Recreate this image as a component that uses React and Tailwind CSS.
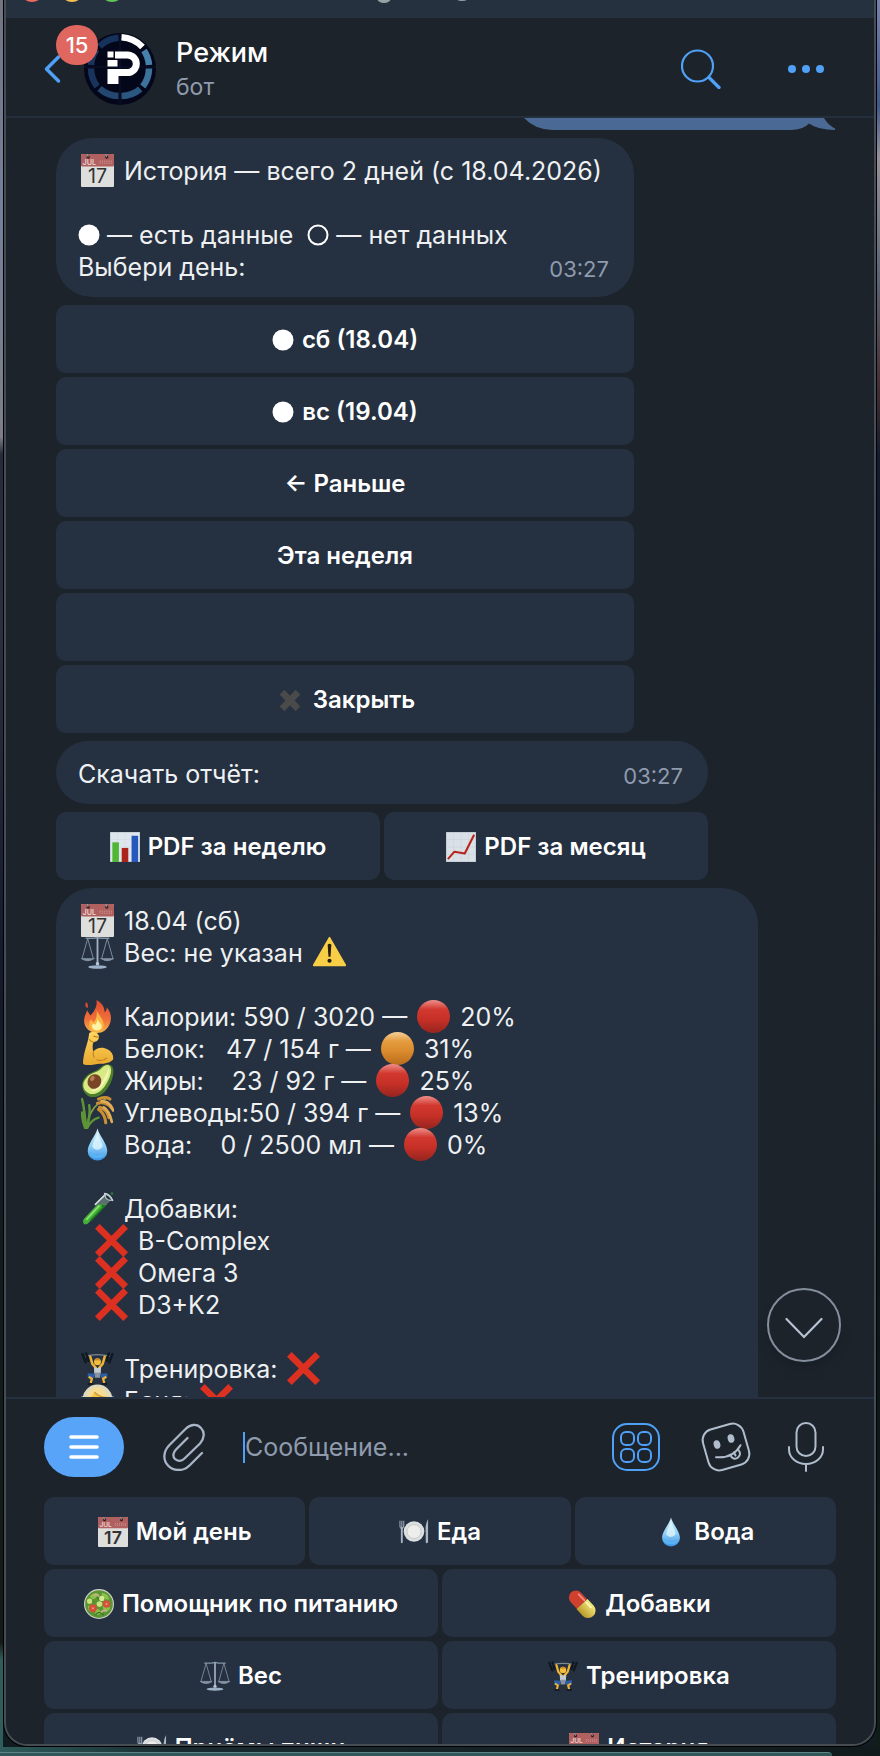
import React from 'react';

// ---------- Emoji drawings, all on a 32x32 canvas ----------

const Calendar = () => (
  <>
    <rect x="0" y="0" width="32" height="32" rx="1" fill="#dededd" />
    <rect x="0" y="0" width="32" height="12" rx="1" fill="#b0605f" />
    <circle cx="7" cy="3" r="1.6" fill="#2a1f26" />
    <circle cx="25" cy="3" r="1.6" fill="#2a1f26" />
    <path d="M6 0l1 3M24 0l1 3" stroke="#8da0a8" strokeWidth="1" />
    <path d="M18 7h12M18 9h12" stroke="#c48583" strokeWidth="1.4" strokeDasharray="1.2 1" />
    <text x="1.5" y="11" fontSize="7" fontWeight="600" fill="#e8d2d0">JUL</text>
    <text x="16" y="28.5" fontSize="19" textAnchor="middle" fill="#333">17</text>
  </>
);

const Scales = () => (
  <g fill="none" stroke="#8392a3" strokeLinecap="round">
    <path d="M5 2.2h8q3-1.6 6 0h8" strokeWidth="1.4" />
    <path d="M16 2v25" strokeWidth="1.8" stroke="#9fb0c2" />
    <path d="M6.5 2.5L1 22M6.5 2.5L12 22M25.5 2.5L20 22M25.5 2.5L31 22" strokeWidth="0.9" />
    <path d="M0.5 22q6 4 12 0zM19.5 22q6 4 12 0z" fill="#8595a8" strokeWidth="1" />
    <circle cx="16" cy="27" r="1.7" fill="#b9c6d4" stroke="none" />
    <ellipse cx="16" cy="30" rx="9" ry="1.7" fill="#9db0c5" stroke="none" />
  </g>
);

const Warning = () => (
  <>
    <path d="M16 1.5L31.5 28.5H0.5z" fill="#f8ce46" stroke="#f8ce46" strokeWidth="1.5" strokeLinejoin="round" />
    <path d="M14.2 8.5q1.8-2 3.6 0L17 20h-2z" fill="#241d0a" />
    <circle cx="16" cy="24" r="2" fill="#241d0a" />
  </>
);

const Fire = () => (
  <>
    <defs>
      <linearGradient id="fire" x1="0" y1="0" x2="0" y2="1">
        <stop offset="0" stopColor="#e2492f" />
        <stop offset="0.6" stopColor="#f0703a" />
        <stop offset="1" stopColor="#f7b743" />
      </linearGradient>
    </defs>
    <path d="M15 0c6 3 8 8 8 12 1-1 2-3 2-5 5 6 5 13 2 18-2 4-6 7-11 7-7 0-13-5-13-12 0-4 2-7 3-10 1 2 2 3 3 5C13 11 16 6 15 0z" fill="url(#fire)" />
    <path d="M5 2q3 3 1 6-3-2-1-6z" fill="#dd4a34" />
    <path d="M15 9c1 5 7 9 7 15 0 4-3 7-6 7-5 0-8-3-8-8 0-3 2-4 2-4l2 3c3-3 4-8 3-13z" fill="#fbb545" />
    <path d="M16 18c0 3 5 5 4 9-1 3-7 4-9 0-1-3 1-4 1-4l2 1q2-2 2-6z" fill="#fff3a4" />
  </>
);

const Muscle = () => (
  <>
    <defs>
      <linearGradient id="muscle" x1="0" y1="0" x2="0" y2="1">
        <stop offset="0" stopColor="#ffd75e" />
        <stop offset="1" stopColor="#e9a92f" />
      </linearGradient>
    </defs>
    <path
      d="M8 1c3-2 8-1 9 2 1 2 0 5-2 6l-3 1c-1 3-1 6 0 9 3-4 9-5 14-2 4 2 6 6 5 10-4 4-10 4-15 4-5 1-10 2-14 0 0-9 3-16 5-24z"
      fill="url(#muscle)"
    />
    <path d="M12 4l5 1M12 10q-3-1-4-3M12 19q-1 3 1 6M15 27q6 2 10-2" fill="none" stroke="#c07b1f" strokeWidth="1" />
  </>
);

const Avocado = () => (
  <>
    <path d="M30 2c3 4 1 14-4 21-5 8-13 11-19 8-6-4-8-12-3-18C9 7 14 8 18 4c4-4 9-5 12-2z" fill="#4b7f2c" />
    <path d="M28 2c3 4 0 12-4 18-5 8-12 11-17 8-6-3-6-10-2-14 4-6 10-5 14-9 4-4 7-5 9-3z" fill="#d9ea85" />
    <path d="M27 4c1 4-1 9-5 15-4 7-9 8-13 7 8-3 12-8 18-22z" fill="#f2f6b5" />
    <ellipse cx="13" cy="17" rx="6.5" ry="7.2" transform="rotate(30 13 17)" fill="#7a4526" />
    <ellipse cx="11" cy="14" rx="2" ry="2.6" transform="rotate(30 11 14)" fill="#b87c52" />
  </>
);

const Rice = () => (
  <g fill="none" strokeLinecap="round">
    <path d="M6 31C6 20 12 8 24 3" stroke="#8aa043" strokeWidth="1.6" />
    <path d="M5 31C4 22 3 10 1 3M5 31C8 24 9 16 8 9M6 31C9 25 13 22 17 21M4 31C2 26 1 20 1 16" stroke="#5d9436" strokeWidth="2.4" />
    <path d="M17 3q6-3 11 0M16 7q8-2 14 5M18 11q7 2 9 10M17 13q6 4 7 13" stroke="#c88f36" strokeWidth="3" strokeDasharray="3 1.2" />
    <path d="M20 5q8 0 11 9M22 11q6 4 8 15" stroke="#e1ae56" strokeWidth="2.6" strokeDasharray="3 1.5" />
  </g>
);

const Drop = () => (
  <>
    <defs>
      <linearGradient id="drop" x1="0" y1="0" x2="0" y2="1">
        <stop offset="0" stopColor="#d8f3fd" />
        <stop offset="0.55" stopColor="#8fd0f7" />
        <stop offset="1" stopColor="#3c93e6" />
      </linearGradient>
    </defs>
    <path d="M16 0.5C18 8 25.5 15 25.5 22.5a9.5 9 0 0 1-19 0C6.5 15 14 8 16 0.5z" fill="url(#drop)" />
    <path d="M16 3.5C16.5 9 20.5 13 21 18c-2 4-9 4-10 0C11.5 13 15 9 16 3.5z" fill="#e6f7fe" opacity="0.75" />
    <path d="M9 24q3 6 12 3" fill="none" stroke="#57b7f6" strokeWidth="2" strokeLinecap="round" />
  </>
);

const RedBall = () => (
  <>
    <defs>
      <linearGradient id="red" x1="0" y1="0" x2="0" y2="1">
        <stop offset="0" stopColor="#ee8f8a" />
        <stop offset="0.28" stopColor="#d23a30" />
        <stop offset="0.6" stopColor="#c62f26" />
        <stop offset="1" stopColor="#94261f" />
      </linearGradient>
    </defs>
    <circle cx="16" cy="16" r="16" fill="url(#red)" />
  </>
);

const OrangeBall = () => (
  <>
    <defs>
      <linearGradient id="orange" x1="0" y1="0" x2="0" y2="1">
        <stop offset="0" stopColor="#f6d19a" />
        <stop offset="0.28" stopColor="#e49c3e" />
        <stop offset="0.6" stopColor="#d98a2c" />
        <stop offset="1" stopColor="#ba6c1c" />
      </linearGradient>
    </defs>
    <circle cx="16" cy="16" r="16" fill="url(#orange)" />
  </>
);

const TestTube = () => (
  <>
    <path d="M23 4L3 26q-2 3 0 5 2 1 4-1L28 9z" fill="#7f9a8e" opacity="0.6" />
    <path d="M16 12h9L7 30q-2 2-4 1-2-2 0-5z" fill="#43b037" />
    <path d="M18 13L5 27" stroke="#8be26f" strokeWidth="1.6" />
    <path d="M20 13.5h3L9 28" fill="none" stroke="#1d7a22" strokeWidth="1.6" />
    <path d="M23 1.5q5 1 7.5 6.5M24 2L14 12" fill="none" stroke="#d5dfe2" strokeWidth="1.7" strokeLinecap="round" />
    <path d="M23 2q5 0 7 6-6 1-7-6z" fill="none" stroke="#b5c3c7" strokeWidth="1" />
    <circle cx="30" cy="1.5" r="1.2" fill="#2f7d36" />
  </>
);

const Cross = () => (
  <path d="M4.5 0L16 11.5 27.5 0 32 4.5 20.5 16 32 27.5 27.5 32 16 20.5 4.5 32 0 27.5 11.5 16 0 4.5z" fill="#dc3021" />
);

const Lifter = () => (
  <>
    <path d="M4 4q12-3 24 0" fill="none" stroke="#7b8790" strokeWidth="1.2" />
    <path d="M1.5 2l3 8M5 1.5l2 7M30.5 2l-3 8M27 1.5l-2 7" stroke="#101820" strokeWidth="2.4" strokeLinecap="round" />
    <path d="M9 4.5l2 7 3.5 4M23 4.5l-2 7-3.5 4" fill="none" stroke="#efb336" strokeWidth="2.4" strokeLinecap="round" strokeLinejoin="round" />
    <circle cx="16" cy="9.5" r="3.4" fill="#f4be3e" />
    <path d="M12.7 8.5q3.3-5 6.6 0-3-1-6.6 0z" fill="#c98b22" />
    <path d="M12.5 14.5q3.5 2 7 0l-0.5 8h-6z" fill="#c3cad2" />
    <path d="M13.5 20h5v5h-5z" fill="#8b949c" />
    <path d="M14 21l-7.5-0.5v4.5l6 0.5zM18 21l7.5-0.5v4.5l-6 0.5z" fill="#2e5fa6" />
    <path d="M7.5 24l3 2-1 4M24.5 24l-3 2 1 4" fill="none" stroke="#efb336" strokeWidth="2.2" />
    <path d="M7.5 31h4M20.5 31h4" stroke="#151c24" strokeWidth="2" strokeLinecap="round" />
  </>
);

const Sauna = () => (
  <>
    <circle cx="16" cy="15" r="14.5" fill="#f3edcf" opacity="0.9" />
    <path d="M2 12q-3 8 2 14M30 12q3 8-2 14" fill="none" stroke="#cfd8e0" strokeWidth="3" opacity="0.6" />
    <circle cx="16" cy="15" r="10" fill="#f5c548" />
    <path d="M6 14q0-10 9-11 9 0 11 11-9-1-13-6-2 5-7 6z" fill="#f3dc93" />
    <path d="M13 8q5 5 12 5" fill="none" stroke="#d39a2c" strokeWidth="1.5" />
    <path d="M12 14v3M20 14v3" stroke="#6a4417" strokeWidth="2" strokeLinecap="round" />
    <path d="M4 32q2-8 12-8t12 8z" fill="#f5c548" />
  </>
);

const BarChart = () => (
  <>
    <rect x="0" y="0" width="32" height="32" fill="#dfe7ee" stroke="#aeb8c0" strokeWidth="1" />
    <path d="M0 8h32M0 16h32M0 24h32M8 0v32M16 0v32M24 0v32" stroke="#d0dae2" strokeWidth="0.6" />
    <rect x="2.5" y="11" width="7" height="21" fill="#4fb733" />
    <rect x="12.5" y="17" width="7" height="15" fill="#ad241c" />
    <rect x="23" y="4" width="7" height="28" fill="#2458bd" />
  </>
);

const LineChart = () => (
  <>
    <rect x="0" y="0" width="32" height="32" fill="#d9e0e6" stroke="#aeb8c0" strokeWidth="1" />
    <path d="M0 8h32M0 16h32M0 24h32M8 0v32M16 0v32M24 0v32" stroke="#ccd5dc" strokeWidth="0.6" />
    <path d="M2 29l7-8 11 2L30 3" fill="none" stroke="#b8241c" strokeWidth="2.2" strokeLinejoin="round" />
  </>
);

const Plate = () => (
  <>
    <circle cx="16" cy="15.5" r="11" fill="#dcdfe0" />
    <circle cx="16" cy="15.5" r="7.5" fill="#ededec" stroke="#c6cacb" strokeWidth="1" />
    <path d="M1 4v5q0 3 2 3t2-3V4M3 4v9" fill="none" stroke="#8c99a8" strokeWidth="1.3" />
    <path d="M3 12v15" stroke="#a9b6c3" strokeWidth="2" strokeLinecap="round" />
    <path d="M31 2v25q-2 2-2.5 0V17q-1-9 2.5-15z" fill="#a9b6c3" />
  </>
);

const Salad = () => (
  <>
    <circle cx="16" cy="16" r="16" fill="#cfd2cd" />
    <circle cx="16" cy="16" r="14.8" fill="#5b9634" />
    <path d="M6 8q4-5 9-3-1 5-6 6zM19 4q7 1 8 7-6 1-8-3zM4 18q6-1 9 4-4 4-8 1zM20 18q5-2 8 2-2 5-7 4zM12 22q4-2 6 3-2 4-6 2z" fill="#8cc04a" />
    <path d="M12 28q4-6 9 0M14 9q4 4 8 1M3 14q5-3 7 0" fill="none" stroke="#3d7824" strokeWidth="1.4" />
    <circle cx="9.5" cy="20.5" r="4.2" fill="#d4523a" />
    <circle cx="24" cy="16" r="4" fill="#d4523a" />
    <circle cx="9.5" cy="20.5" r="1" fill="#eea27b" />
    <circle cx="24" cy="16" r="1" fill="#eea27b" />
    <circle cx="6" cy="13" r="2.8" fill="#cbe37c" />
    <circle cx="16.5" cy="16" r="3" fill="#cbe37c" />
    <circle cx="19" cy="10" r="2.8" fill="#d7e992" />
    <path d="M10 7q4-3 6 1M18 25q4-4 6-1" fill="none" stroke="#c9b08f" strokeWidth="1.8" />
  </>
);

const Pill = () => (
  <g transform="rotate(47 16 16)">
    <defs>
      <linearGradient id="pill" x1="0" y1="0" x2="0" y2="1">
        <stop offset="0" stopColor="#f4ea7c" />
        <stop offset="1" stopColor="#b99a2b" />
      </linearGradient>
    </defs>
    <path d="M16 8.5H6.500a7.5 7.5 0 0 0 0 15H16z" fill="#d0402f" />
    <path d="M16 8h9.5a8 8 0 0 1 0 16H16z" fill="url(#pill)" />
    <path d="M6 11.5h9" stroke="#ee8d7f" strokeWidth="2" strokeLinecap="round" />
    <path d="M18 11.5h7" stroke="#fbf6b8" strokeWidth="2" strokeLinecap="round" />
  </g>
);

const DarkCross = () => (
  <path d="M10 5l6 6.5L22 5l5 5-6 6.5 6 6.5-5 5-6-6.5-6 6.5-5-5 6-6.5L5 10z" fill="#4a4a4b" />
);

const drawings = {
  calendar: Calendar,
  scales: Scales,
  warning: Warning,
  fire: Fire,
  muscle: Muscle,
  avocado: Avocado,
  rice: Rice,
  drop: Drop,
  red: RedBall,
  orange: OrangeBall,
  tube: TestTube,
  cross: Cross,
  lifter: Lifter,
  sauna: Sauna,
  bars: BarChart,
  line: LineChart,
  plate: Plate,
  salad: Salad,
  pill: Pill,
  darkCross: DarkCross,
};

// Emoji inside message text, the negative margins keep it from growing the line
const E = ({ n }) => {
  const Drawing = drawings[n];
  return (
    <svg viewBox="0 0 32 32" aria-hidden="true" className="inline-block w-[33px] h-[33px] mx-[3px] -my-2 align-[1px]">
      <Drawing />
    </svg>
  );
};

// Emoji inside a keyboard button
const BtnEmoji = ({ n }) => {
  const Drawing = drawings[n];
  return (
    <svg viewBox="0 0 32 32" aria-hidden="true" className="w-[30px] h-[30px] shrink-0">
      <Drawing />
    </svg>
  );
};

const Dot = ({ hollow }) => (
  <svg viewBox="0 0 22 22" aria-hidden="true" className="inline-block w-[22px] h-[22px] shrink-0 align-[-2px]">
    {hollow ? (
      <circle cx="11" cy="11" r="9.5" fill="none" stroke="#fff" strokeWidth="2" />
    ) : (
      <circle cx="11" cy="11" r="10.5" fill="#fff" />
    )}
  </svg>
);

const KeyButton = ({ emoji, dot, children }) => (
  <button className="flex-1 basis-0 h-[68px] pt-0.5 rounded-[10px] bg-[#253040] text-white text-[24px] leading-8 font-semibold flex items-center justify-center gap-2 whitespace-pre">
    {emoji && <BtnEmoji n={emoji} />}
    {dot && <Dot />}
    {children}
  </button>
);

const Line = ({ children }) => <p className="h-8 whitespace-pre">{children}</p>;

const Time = () => <time className="h-8 pt-0.5 pr-[3px] text-[22px] leading-8 text-[#8f9bad]">03:27</time>;

const nutrients = [
  { icon: 'fire', label: 'Калории: ', value: '590 / 3020 — ', ball: 'red', percent: '20%' },
  { icon: 'muscle', label: 'Белок:   ', value: '47 / 154 г — ', ball: 'orange', percent: '31%' },
  { icon: 'avocado', label: 'Жиры:    ', value: '23 / 92 г — ', ball: 'red', percent: '25%' },
  { icon: 'rice', label: 'Углеводы:', value: '50 / 394 г — ', ball: 'red', percent: '13%' },
  { icon: 'drop', label: 'Вода:    ', value: '0 / 2500 мл — ', ball: 'red', percent: '0%' },
];

const supplements = ['B-Complex', 'Омега 3', 'D3+K2'];

const historyButtons = [
  { dot: true, text: 'сб (18.04)' },
  { dot: true, text: 'вс (19.04)' },
  { text: '← Раньше' },
  { text: 'Эта неделя' },
  { text: ' ' },
  { emoji: 'darkCross', text: 'Закрыть' },
];

const keyboard = [
  [
    { emoji: 'calendar', text: 'Мой день' },
    { emoji: 'plate', text: 'Еда' },
    { emoji: 'drop', text: 'Вода' },
  ],
  [
    { emoji: 'salad', text: 'Помощник по питанию' },
    { emoji: 'pill', text: 'Добавки' },
  ],
  [
    { emoji: 'scales', text: 'Вес' },
    { emoji: 'lifter', text: 'Тренировка' },
  ],
  [
    { emoji: 'plate', text: 'Приёмы пищи' },
    { emoji: 'calendar', text: 'История' },
  ],
];

const TitleBar = () => (
  <div className="h-[18px] shrink-0 bg-[#263140]">
    <svg viewBox="0 0 868 18" preserveAspectRatio="xMinYMin slice" aria-hidden="true" className="w-full h-full">
      <circle cx="26" cy="-10" r="12" fill="#ec6a5e" />
      <circle cx="66" cy="-10" r="12" fill="#f4bf4f" />
      <circle cx="106" cy="-10" r="12" fill="#61c554" />
      <ellipse cx="378" cy="-1" rx="6.5" ry="4" fill="#9aa0a8" />
      <ellipse cx="456" cy="-1" rx="5" ry="2" fill="#9aa0a8" />
    </svg>
  </div>
);

const Avatar = () => (
  <svg viewBox="0 0 72 72" aria-hidden="true" className="w-[72px] h-[72px] shrink-0">
    <circle cx="36" cy="36" r="36" fill="#04061a" />
    <path d="M36 0v72M0 34h72" stroke="#131a35" strokeWidth="0.8" />
    <g fill="none" strokeWidth="6.5">
      <path d="M37.5 4.3A31.5 31.5 0 0 1 58.5 14" stroke="#fff" />
      <path d="M60 17.5A30 30 0 0 1 65 32" stroke="#4581ab" />
      <path d="M65 35.5A30 30 0 0 1 58.8 53.5" stroke="#3d729d" />
      <path d="M56.3 56A30 30 0 0 1 37.5 63" stroke="#2b5680" />
      <path d="M34.5 63A30 30 0 0 1 15.5 55.5" stroke="#23476f" />
      <path d="M13.2 53.5A30 30 0 0 1 7 35.5" stroke="#18345c" />
      <path d="M7 32A30 30 0 0 1 12.5 16.5" stroke="#18345c" />
      <path d="M15.5 13.5A30 30 0 0 1 34.5 4.8" stroke="#16315a" />
    </g>
    <g fill="#fff">
      <rect x="23.5" y="18.5" width="6" height="6" />
      <rect x="23.5" y="27" width="10" height="6.5" />
      <rect x="23.5" y="36" width="11" height="15" />
    </g>
    <path d="M31 22h12.5a8.8 8.8 0 0 1 0 17.6H32" fill="none" stroke="#fff" strokeWidth="7" />
  </svg>
);

const Header = () => (
  <header className="h-[100px] shrink-0 border-b-2 border-[#232f3d] flex items-center pt-[3px] pl-[38px] pr-[48px]">
    <button aria-label="Назад" className="relative w-10 h-[72px] shrink-0">
      <svg viewBox="0 0 18 30" className="w-[18px] h-[30px]" fill="none" stroke="#4fa0f7" strokeWidth="3.5" strokeLinecap="round" strokeLinejoin="round">
        <path d="M14.5 3L2.5 15l12 12" />
      </svg>
      <span className="absolute left-3 -top-2 z-10 w-[42px] h-10 rounded-full bg-[#e06660] text-white text-[22px] leading-10 font-medium text-center">15</span>
    </button>
    <Avatar />
    <div className="flex-1 min-w-0 ml-5">
      <h1 className="text-[27px] leading-9 font-medium text-white">Режим</h1>
      <p className="text-[23px] leading-8 text-[#8f9bad]">бот</p>
    </div>
    <button aria-label="Поиск" className="mr-[65px]">
      <svg viewBox="0 0 40 40" className="block w-10 h-10" fill="none" stroke="#4fa0f7">
        <circle cx="16.5" cy="17" r="15.5" strokeWidth="2.2" />
        <path d="M28 28.5l10 10" strokeWidth="3.3" strokeLinecap="round" />
      </svg>
    </button>
    <button aria-label="Меню чата">
      <svg viewBox="0 0 40 12" className="block w-10 h-3" fill="#4fa0f7">
        <circle cx="6" cy="6" r="4" />
        <circle cx="20" cy="6" r="4" />
        <circle cx="34" cy="6" r="4" />
      </svg>
    </button>
  </header>
);

const Chat = () => (
  <main className="relative flex-1 min-h-0 overflow-hidden pl-[50px]">
    {/* Tail of the last outgoing message */}
    <div className="flex justify-end pr-[38px]">
      <svg viewBox="0 0 312 12" aria-hidden="true" className="block w-[312px] h-3">
        <path d="M0 0Q11 11.5 28 12H268Q280 11 285 5.5 294 12 311 12V10.5Q304 7 300 0z" fill="#4a6a95" />
      </svg>
    </div>

    <section className="mt-2 max-w-[578px]">
      <div className="rounded-[36px] bg-[#253040] px-[22px] pt-[17px] pb-[14px]">
        <Line><E n="calendar" /> История — всего 2 дней (с 18.04.2026)</Line>
        <Line> </Line>
        <Line><Dot /> — есть данные  <Dot hollow /> — нет данных</Line>
        <div className="flex justify-between">
          <Line>Выбери день:</Line>
          <Time />
        </div>
      </div>
      <div className="mt-2 flex flex-col gap-1">
        {historyButtons.map((b) => (
          <div key={b.text} className="flex">
            <KeyButton emoji={b.emoji} dot={b.dot}>{b.text}</KeyButton>
          </div>
        ))}
      </div>
    </section>

    <section className="mt-2 max-w-[652px]">
      <div className="rounded-[32px] bg-[#253040] px-[22px] pt-[17px] pb-[14px] flex justify-between">
        <Line>Скачать отчёт:</Line>
        <Time />
      </div>
      <div className="mt-2 flex gap-1">
        <KeyButton emoji="bars">PDF за неделю</KeyButton>
        <KeyButton emoji="line">PDF за месяц</KeyButton>
      </div>
    </section>

    <section className="mt-2 max-w-[702px] rounded-[36px] bg-[#253040] px-[22px] pt-[17px] pb-12">
      <Line><E n="calendar" /> 18.04 (сб)</Line>
      <Line><E n="scales" /> Вес: не указан <E n="warning" /></Line>
      <Line> </Line>
      {nutrients.map((n) => (
        <Line key={n.icon}><E n={n.icon} /> {n.label}{n.value}<E n={n.ball} /> {n.percent}</Line>
      ))}
      <Line> </Line>
      <Line><E n="tube" /> Добавки:</Line>
      {supplements.map((s) => (
        <Line key={s}>{'  '}<E n="cross" /> {s}</Line>
      ))}
      <Line> </Line>
      <Line><E n="lifter" /> Тренировка: <E n="cross" /></Line>
      <Line><E n="sauna" /> Баня: <E n="cross" /></Line>
    </section>

    <button aria-label="Вниз" className="absolute right-[33px] bottom-[35px] w-[74px] h-[74px] rounded-full border-2 border-[#848e9c] bg-[#1c232b] flex items-center justify-center shadow-lg">
      <svg viewBox="0 0 38 22" className="w-[38px] h-[22px] mt-1.5" fill="none" stroke="#b7c3d4" strokeWidth="2.2" strokeLinecap="round">
        <path d="M1.5 2L19 20 36.5 2" />
      </svg>
    </button>
  </main>
);

const Composer = () => (
  <form className="h-[100px] shrink-0 border-t-2 border-[#253040] flex items-center pb-0.5 pl-[38px] pr-[50px]">
    <button type="button" aria-label="Команды" className="w-20 h-[60px] shrink-0 rounded-[30px] bg-[#57a4f8] flex items-center justify-center">
      <svg viewBox="0 0 30 24" className="w-[30px] h-6" stroke="#fff" strokeWidth="3.6" strokeLinecap="round">
        <path d="M2 2h26M2 12h26M2 22h26" />
      </svg>
    </button>
    <button type="button" aria-label="Прикрепить" className="ml-[39px] shrink-0">
      <svg viewBox="0 0 42 48" className="block w-[42px] h-12" fill="none" stroke="#a8b5c6" strokeWidth="2.3" strokeLinecap="round" strokeLinejoin="round">
        <path d="M39 30L26.5 42.5C20 49 10 48 5 42.5 0 37 0 29 6 22.5L22 6.5C27 1 34 0.5 38 5c4 4 3.5 10.5-1 15.5L21.5 35.5c-3 3-7 3-9.5 0.5-2.5-2.5-2-6.5 1-9.5L24.5 15" />
      </svg>
    </button>
    <span className="ml-[38px] w-0.5 h-[31px] shrink-0 bg-[#4fa0f7]" />
    <input
      type="text"
      aria-label="Сообщение"
      placeholder="Сообщение..."
      className="flex-1 min-w-0 h-10 bg-transparent outline-none text-white placeholder:text-[#8f9bad]"
    />
    <button type="button" aria-label="Клавиатура бота" className="shrink-0">
      <svg viewBox="0 0 48 48" className="block w-12 h-12" fill="none" stroke="#4fa0f7" strokeWidth="2">
        <rect x="1" y="1" width="46" height="46" rx="14" />
        <rect x="9" y="9" width="13" height="13" rx="5" />
        <rect x="26" y="9" width="13" height="13" rx="5" />
        <rect x="9" y="26" width="13" height="13" rx="5" />
        <rect x="26" y="26" width="13" height="13" rx="5" />
      </svg>
    </button>
    <button type="button" aria-label="Стикеры" className="ml-10 shrink-0">
      <svg viewBox="0 0 52 52" className="block w-[52px] h-[52px]" fill="none" stroke="#b0bdcd" strokeWidth="2" strokeLinecap="round">
        <rect x="5" y="5" width="42" height="42" rx="11" transform="rotate(-16 26 26)" />
        <ellipse cx="17" cy="23.5" rx="3.3" ry="4.3" transform="rotate(-16 17 23.5)" fill="#b0bdcd" stroke="none" />
        <ellipse cx="31" cy="17.5" rx="3.3" ry="4.3" transform="rotate(-16 31 17.5)" fill="#b0bdcd" stroke="none" />
        <path d="M16 36.2q17 1.5 24.5-12" />
        <path d="M30.5 34c1 4 5 4.5 7.5 2.5s2.5-5 0.5-7.5M34 31.5l1.5 3" />
      </svg>
    </button>
    <button type="button" aria-label="Голосовое сообщение" className="ml-9 shrink-0">
      <svg viewBox="0 0 36 50" className="block w-9 h-[50px]" fill="none" stroke="#b0bdcd" strokeWidth="2" strokeLinecap="round">
        <rect x="8.5" y="1" width="19" height="33" rx="9.5" />
        <path d="M1 25v2.5a17 14.5 0 0 0 34 0V25M18 42v7" />
      </svg>
    </button>
  </form>
);

const Keyboard = () => (
  <div className="h-[247px] shrink-0 overflow-hidden px-[38px] flex flex-col gap-1">
    {keyboard.map((row, i) => (
      <div key={i} className="flex gap-1 shrink-0">
        {row.map((b) => (
          <KeyButton key={b.text} emoji={b.emoji}>{b.text}</KeyButton>
        ))}
      </div>
    ))}
  </div>
);

export default function App() {
  return (
    <div className="h-screen flex flex-col bg-[#101c20] font-['Inter','Liberation_Sans',sans-serif] text-[25px] leading-8 text-[#eef0f2]">
      <div className="flex-1 min-h-0 flex">
        <div className="w-[3px] shrink-0 bg-[linear-gradient(to_bottom,#727483_0%,#74809c_12%,#7d7e87_25%,#262a3a_26%,#2b2f40_36%,#15192c_55%,#131b1d_75%,#131a16_94%,#2f5c5c_95%)]" />
        <div className="flex-1 min-w-0 border-x border-b border-black rounded-b-[24px] bg-black">
          <div className="h-full border-x-2 border-b-2 border-[#454c53] rounded-b-[23px] overflow-hidden bg-[#1c232b] flex flex-col">
            <TitleBar />
            <Header />
            <Chat />
            <Composer />
            <Keyboard />
          </div>
        </div>
        <div className="w-[3px] shrink-0 bg-[linear-gradient(to_bottom,#7680ad_0%,#415787_6%,#93909a_9%,#5b6273_16%,#452f33_22%,#151b2e_26%,#0a1428_40%,#201d28_50%,#0b151c_70%,#101c16_100%)]" />
      </div>
      <div className="h-[9px] shrink-0 flex flex-col justify-end bg-[linear-gradient(to_right,#2f5c5c_0%,#182a2e_20%,#101a1c_100%)]">
        <div className="h-1 border-t border-[#5d8584] bg-[#31575a] mr-12 rounded-tr-[4px]" />
      </div>
    </div>
  );
}
